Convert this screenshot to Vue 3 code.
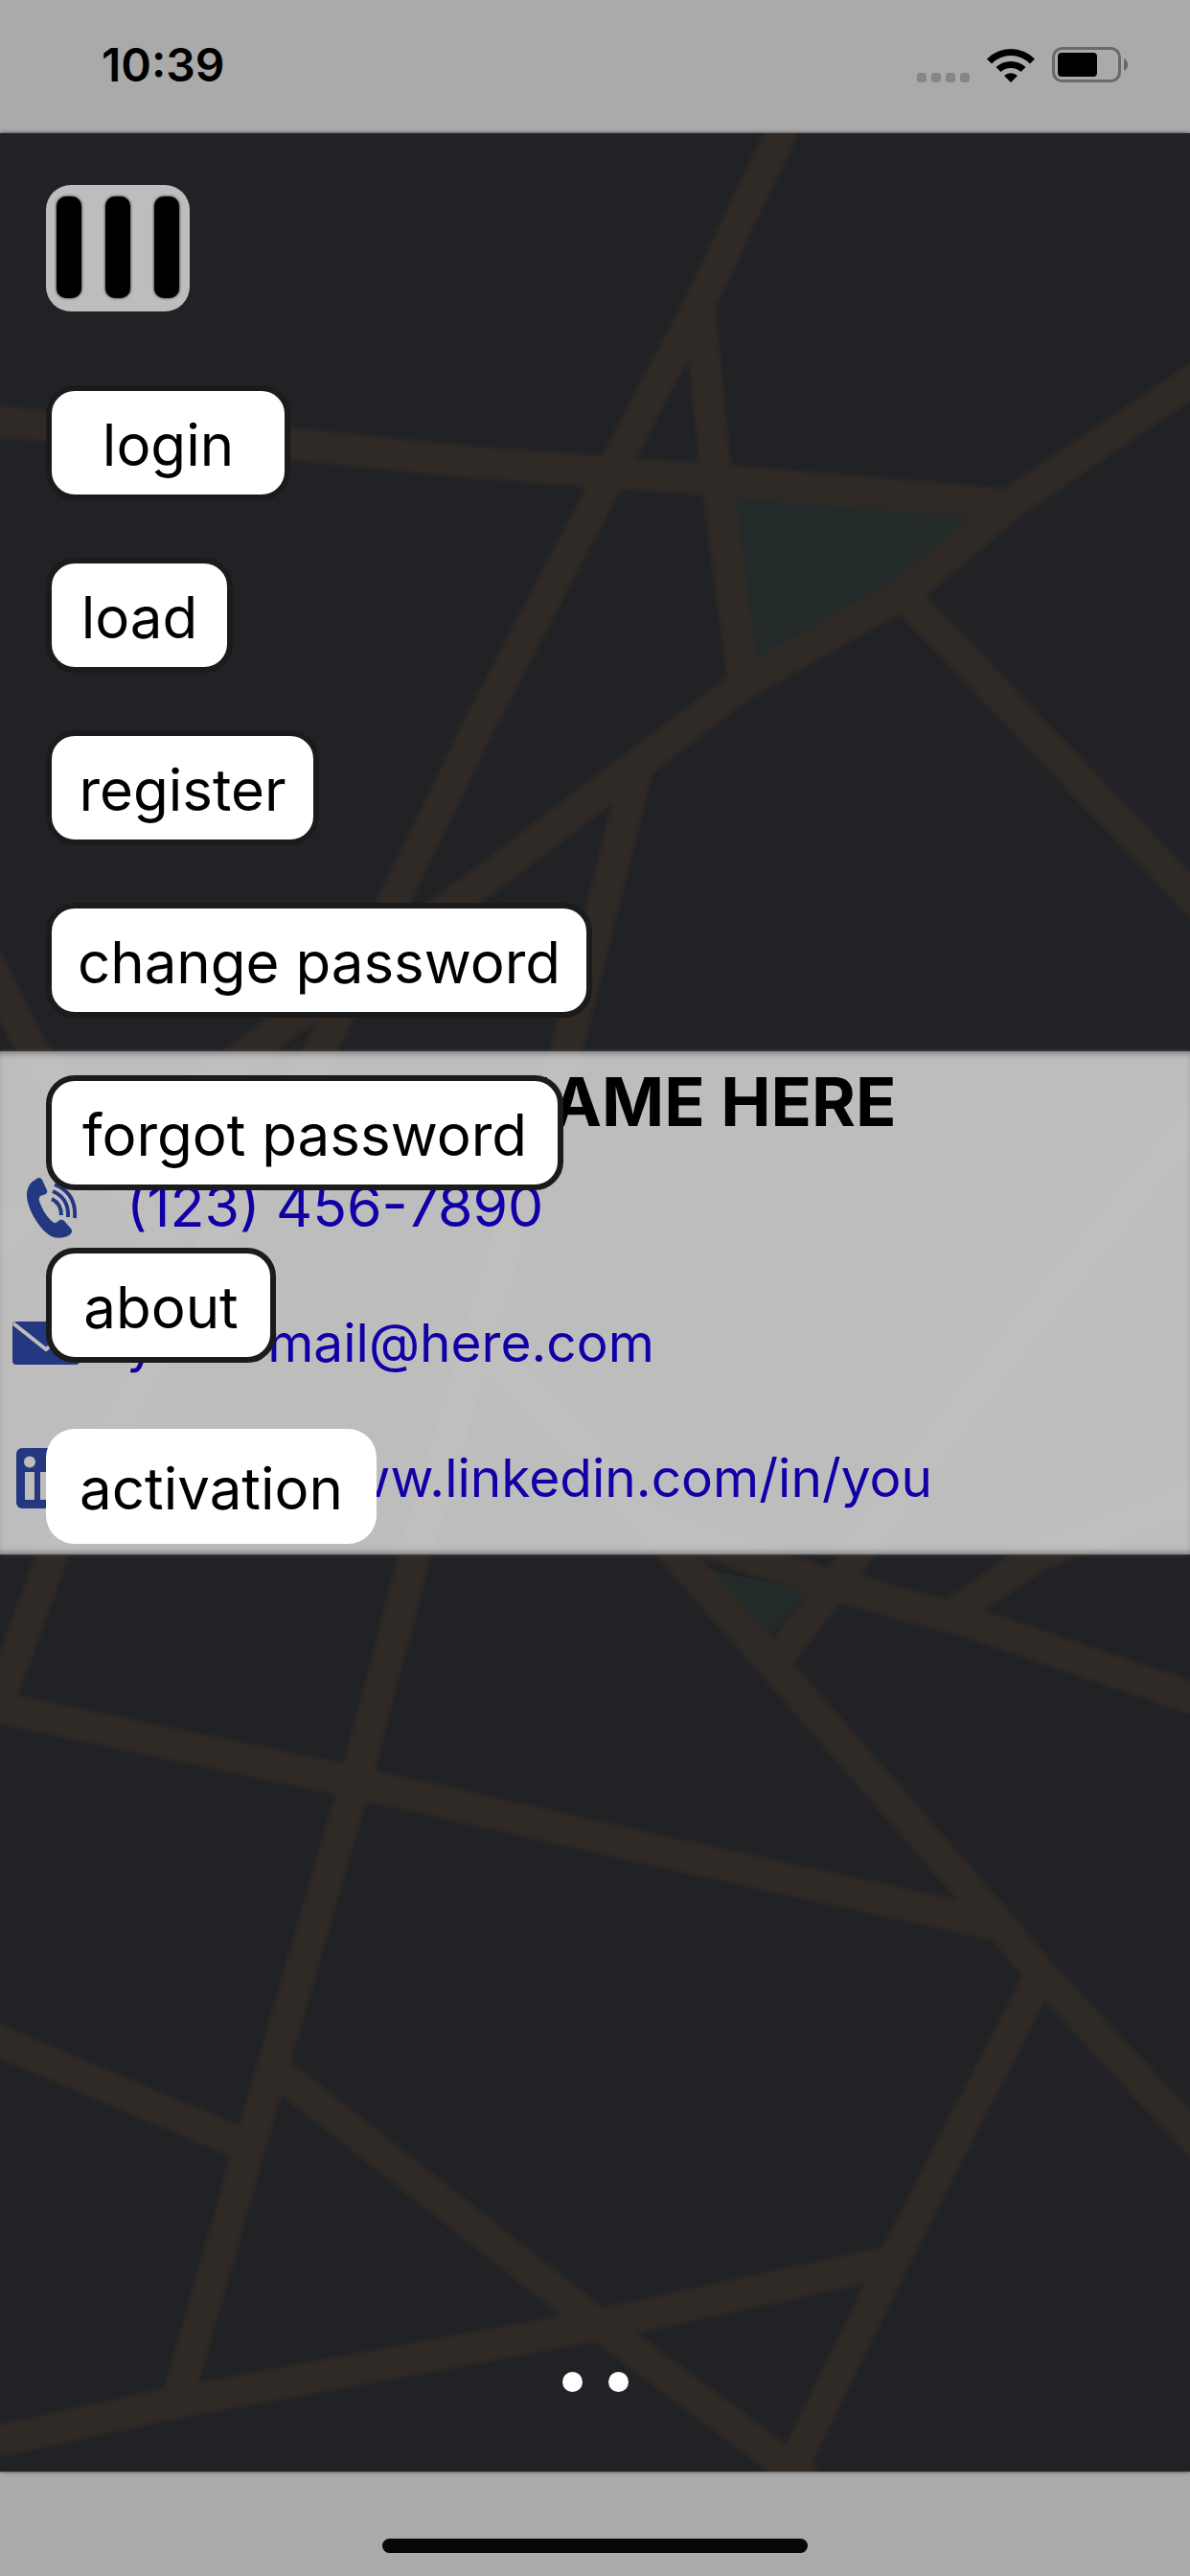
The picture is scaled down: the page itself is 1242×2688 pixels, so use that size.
<script setup>
import { ref } from 'vue'

const menu = [
  { label: 'login', width: 255 },
  { label: 'load', width: 195 },
  { label: 'register', width: 285 },
  { label: 'change password', width: 570 },
  { label: 'forgot password', width: 540 },
  { label: 'about', width: 240 },
]
const open = ref(true)
const page = ref(0)
</script>

<template>
  <div class="screen">
    <header class="status">
      <time class="clock">10:39</time>
      <div class="indicators">
        <span class="signal"><i></i><i></i><i></i><i></i></span>
        <svg class="wifi" viewBox="0 0 50 36" aria-hidden="true">
          <path d="M0 11.500A35 35 0 0 1 50 11.500L45 16.500A28 28 0 0 0 5 16.500Z" />
          <path d="M9.500 20A23 23 0 0 1 40.500 20L35.500 25A15.500 15.500 0 0 0 14.500 25Z" />
          <path d="M18 29A10.500 10.500 0 0 1 32 29L25 36Z" />
        </svg>
        <svg class="battery" viewBox="0 0 80 37" aria-hidden="true">
          <rect x="1.500" y="1.500" width="69" height="34" rx="9" fill="none" stroke="#696969" stroke-width="3" />
          <rect x="6" y="6" width="41" height="25" rx="4" />
          <path d="M75 12C80.500 15 80.500 22 75 25Z" fill="#696969" />
        </svg>
      </div>
    </header>

    <main class="stage">
      <svg class="map" viewBox="0 139 1242 2440" preserveAspectRatio="xMidYMid slice" aria-hidden="true">
        <path class="park" d="M765 515L1030 541L785 710Z M730 1636L845 1660L798 1715Z" />
        <path
          class="road"
          d="M825 119L727 323L500 757L340 1085L147 1437L55 1622L-5 1785
            M730 323L746 483L776 712
            M-20 439L302 463L500 483L737 500L1058 527
            M1270 380L1058 523L945 618L779 712L666 797L500 923L300 1067L-20 1305
            M945 623L1262 955
            M666 800L648 870L590 1100L530 1294L433 1623L372 1855L285 2155L184 2508
            M-20 990L25 1080L190 1330
            M-20 1778L372 1860L713 1937L1038 2008
            M500 1400L560 1459L669 1580L705 1621L808 1738L1040 2004L1085 2058L1262 2248
            M680 1590L855 1650L1010 1692L1262 1778
            M1262 1150L1069 1387L951 1541L890 1628L808 1735
            M1262 1557L1082 1623L1000 1680
            M-20 2122L250 2236
            M290 2162L625 2426L845 2590
            M-20 2551L174 2509L625 2426L930 2360
            M1085 2062L932 2360L815 2600"
        />
      </svg>

      <section class="card">
        <h1>YOUR NAME HERE</h1>
        <ul class="contacts">
          <li>
            <span class="icon">
              <svg width="64" height="64" viewBox="-12 0 64 64" aria-hidden="true">
                <path d="M9 3C12 0 15 1 16 3L21 14C22 17 20 18 17 19C12 20 12 23 14 28C17 36 22 43 27 47C29 49 31 48 33 46C35 44 37 44 39 46L46 54C48 57 47 59 44 61C37 65 28 65 21 59C9 49 0 30 0 19C0 11 4 5 9 3Z" />
                <path class="wave" d="M26 23Q36 28 36 40M27 15Q44 22 43 42M29 8Q52 17 50 43" />
              </svg>
            </span>
            <a class="phone" href="tel:1234567890">(123) 456-7890</a>
          </li>
          <li>
            <span class="icon">
              <svg width="70" height="45" viewBox="0 0 70 45" aria-hidden="true">
                <rect width="70" height="45" rx="4" />
                <path class="flap" d="M1 2L35 29L69 2" />
              </svg>
            </span>
            <a href="mailto:youremail@here.com">youremail@here.com</a>
          </li>
          <li>
            <span class="icon">
              <svg width="63" height="63" viewBox="0 0 63 63" aria-hidden="true">
                <rect width="63" height="63" rx="6" />
                <g fill="#bdbdbd">
                  <circle cx="14" cy="14.500" r="6" />
                  <path d="M9 25H19V54H9ZM25 25H34V29C40 22 54 22 54 36V54H44V40C44 31 34 31 34 40V54H25Z" />
                </g>
              </svg>
            </span>
            <a href="https://www.linkedin.com/in/you">https://www.linkedin.com/in/you</a>
          </li>
        </ul>
      </section>

      <nav class="menu" aria-label="Main">
        <button class="toggle" type="button" aria-label="Menu" @click="open = !open">
          <i></i><i></i><i></i>
        </button>
        <div v-show="open" class="items">
          <button v-for="item in menu" :key="item.label" type="button" :style="{ width: item.width + 'px' }">
            {{ item.label }}
          </button>
          <button class="plain" type="button">activation</button>
        </div>
      </nav>

      <div class="pager">
        <button v-for="n in 2" :key="n" type="button" :aria-label="'Page ' + n" @click="page = n - 1"></button>
      </div>
    </main>

    <footer class="home"><span></span></footer>
  </div>
</template>

<style>
body {
  margin: 0;
  background: #aaaaaa;
}
</style>

<style scoped>
.screen {
  min-height: 100vh;
  display: flex;
  flex-direction: column;
  font-family: Inter, "Liberation Sans", sans-serif;
  color: #000;
}
.status {
  height: 139px;
  box-sizing: border-box;
  padding: 0 64px 4px 106px;
  display: flex;
  align-items: center;
  justify-content: space-between;
}
.clock {
  font-size: 48px;
  line-height: 48px;
  font-weight: 600;
}
.indicators {
  display: flex;
  align-items: center;
  gap: 18px;
}
.signal {
  display: flex;
  gap: 5px;
  align-self: flex-end;
}
.signal i {
  width: 10px;
  height: 10px;
  border-radius: 3px;
  background: #868686;
}
.wifi {
  width: 50px;
  height: 36px;
}
.battery {
  width: 80px;
  height: 37px;
}
.stage {
  position: relative;
  flex: 1;
  display: flex;
  flex-direction: column;
  justify-content: center;
  background: #212225;
  box-shadow: 0 0 4px #333;
}
.map {
  position: absolute;
  inset: 0;
  width: 100%;
  height: 100%;
}
.road {
  fill: none;
  stroke: #302a26;
  stroke-width: 33px;
  stroke-linejoin: round;
  filter: blur(2px);
}
.park {
  fill: #232b2a;
}
.card {
  position: relative;
  height: 525px;
  background: rgb(250 250 250 / 72%);
  box-shadow: 0 0 4px #555, inset 0 6px 6px -4px #777, inset 0 -6px 6px -4px #777;
}
h1 {
  margin: 0;
  padding-top: 13px;
  font-size: 70px;
  line-height: 80px;
  font-weight: 700;
  text-align: center;
}
.contacts {
  margin: 0;
  padding: 0;
  list-style: none;
}
.contacts li {
  height: 141px;
  display: flex;
  align-items: center;
}
.icon {
  width: 96px;
  display: flex;
  justify-content: center;
  fill: #243882;
}
.wave {
  fill: none;
  stroke: #243882;
  stroke-width: 4px;
}
.flap {
  fill: none;
  stroke: #bdbdbd;
  stroke-width: 4px;
}
.contacts a {
  margin-left: 36px;
  font-size: 55px;
  line-height: 66px;
  color: #1000a6;
  text-decoration: none;
}
.contacts .phone {
  padding-bottom: 3px;
  font-size: 59px;
}
.menu {
  position: absolute;
  top: 54px;
  left: 48px;
}
button {
  font: inherit;
  color: inherit;
  border: 0;
  padding: 0;
}
.toggle {
  width: 150px;
  height: 132px;
  padding: 0 11px 3px;
  display: flex;
  align-items: center;
  justify-content: space-between;
  background: #bdbdbd;
  border-radius: 26px;
}
.toggle i {
  width: 26px;
  height: 106px;
  border-radius: 10px;
  background: #000;
  box-shadow: 0 0 3px #000;
}
.items {
  margin-top: 77px;
  display: flex;
  flex-direction: column;
  align-items: flex-start;
  gap: 60px;
}
.items button {
  height: 120px;
  padding-top: 3px;
  border: 6px solid #1b1b1b;
  border-radius: 30px;
  background: #fff;
  font-size: 60px;
  line-height: 72px;
  white-space: nowrap;
}
.items .plain {
  width: 345px;
  margin-top: 9px;
  border: 0;
}
.pager {
  position: absolute;
  bottom: 83px;
  left: 0;
  right: 0;
  display: flex;
  justify-content: center;
  gap: 27px;
}
.pager button {
  width: 21px;
  height: 21px;
  border-radius: 50%;
  background: #fff;
}
.home {
  height: 109px;
  display: flex;
  justify-content: center;
  align-items: flex-end;
}
.home span {
  width: 444px;
  height: 15px;
  margin-bottom: 24px;
  border-radius: 8px;
  background: #070707;
}
</style>
